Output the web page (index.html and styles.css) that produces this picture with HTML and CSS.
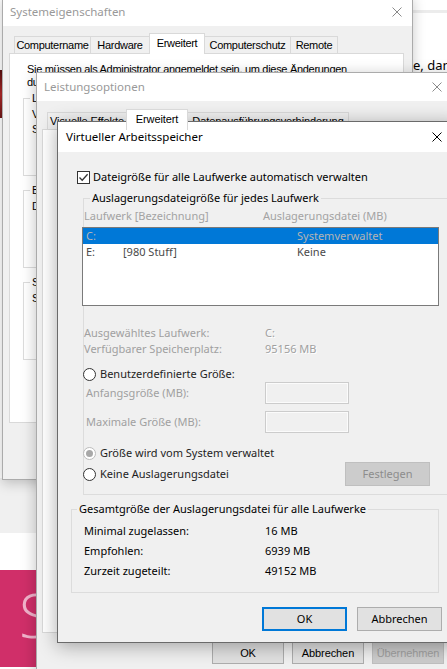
FILE: index.html
```html
<!DOCTYPE html>
<html lang="de">
<head>
<meta charset="utf-8">
<title>Virtueller Arbeitsspeicher</title>
<link rel="stylesheet" href="styles.css">
</head>
<body>
<div class="desktop">
  <div class="bg-band"></div>
  <div class="bg-red"></div>
  <div class="bg-text">e, dann</div>
  <div class="bg-grey"></div>
  <div class="bg-white"></div>
  <div class="bg-tile"><span class="tile-letter">S</span></div>

  <section class="win win-sys">
    <header class="titlebar tb-sys">
      <span class="title title-inactive">Systemeigenschaften</span>
      <svg class="close close-sys" viewBox="0 0 10 10" width="10" height="10"><path d="M0.5 0.5 L9.5 9.5 M9.5 0.5 L0.5 9.5" stroke="currentColor" stroke-width="1" fill="none"/></svg>
    </header>
    <div class="classic sys-body">
      <div class="tabs tabs-sys">
        <span class="tab w-cn">Computername</span>
        <span class="tab w-hw">Hardware</span>
        <span class="tab sel w-er">Erweitert</span>
        <span class="tab w-cs">Computerschutz</span>
        <span class="tab w-re">Remote</span>
      </div>
      <div class="sys-panel">
        <p class="sys-intro">Sie müssen als Administrator angemeldet sein, um diese Änderungen<br>durchführen zu können.</p>
        <div class="sgroup">
          <span class="slegend">Leistung</span>
          <p class="sgtext">Visuelle Effekte, Prozessorzeitplanung, Speichernutzung und<br>Speicherverwaltung</p>
        </div>
        <div class="sgroup">
          <span class="slegend">Benutzerprofile</span>
          <p class="sgtext">Desktopeinstellungen bezüglich der Anmeldung</p>
        </div>
        <div class="sgroup">
          <span class="slegend">Starten und Wiederherstellen</span>
          <p class="sgtext">Systemstart, Systemfehler und Debuginformationen</p>
        </div>
      </div>
    </div>
  </section>

  <section class="win win-perf">
    <header class="titlebar tb-perf">
      <span class="title title-inactive">Leistungsoptionen</span>
      <svg class="close close-perf" viewBox="0 0 10 10" width="10" height="10"><path d="M0.5 0.5 L9.5 9.5 M9.5 0.5 L0.5 9.5" stroke="currentColor" stroke-width="1" fill="none"/></svg>
    </header>
    <div class="classic perf-body">
      <div class="tabs tabs-perf">
        <span class="tab w-ve">Visuelle Effekte</span>
        <span class="tab sel w-pe">Erweitert</span>
        <span class="tab w-dv">Datenausführungsverhinderung</span>
      </div>
      <div class="perf-panel"></div>
      <div class="perf-buttons">
        <span class="cbtn">OK</span>
        <span class="cbtn">Abbrechen</span>
        <span class="cbtn cbtn-dis">Übernehmen</span>
      </div>
    </div>
  </section>

  <section class="win win-vm">
    <header class="titlebar tb-vm">
      <span class="title">Virtueller Arbeitsspeicher</span>
      <svg class="close close-vm" viewBox="0 0 10 10" width="10" height="10"><path d="M0.5 0.5 L9.5 9.5 M9.5 0.5 L0.5 9.5" stroke="currentColor" stroke-width="1" fill="none"/></svg>
    </header>
    <div class="vm-body">
      <div class="check-row">
        <span class="cb"><svg viewBox="0 0 11 11" width="11" height="11"><path d="M1.5 5.5 L4.2 8.3 L9.6 2.2" fill="none" stroke="#333" stroke-width="1.3"/></svg></span>
        <span class="lbl">Dateigröße für alle Laufwerke automatisch verwalten</span>
      </div>

      <div class="group group-drives">
        <span class="legend">Auslagerungsdateigröße für jedes Laufwerk</span>
        <div class="hdr-row">
          <span class="hdr-c1">Laufwerk [Bezeichnung]</span>
          <span>Auslagerungsdatei (MB)</span>
        </div>
        <div class="listbox">
          <div class="lrow sel"><span class="c1">C:</span><span class="c2"></span><span class="c3">Systemverwaltet</span></div>
          <div class="lrow"><span class="c1">E:</span><span class="c2">[980 Stuff]</span><span class="c3">Keine</span></div>
        </div>
        <div class="info">
          <div class="info-row"><span class="info-l">Ausgewähltes Laufwerk:</span><span class="info-v">C:</span></div>
          <div class="info-row"><span class="info-l">Verfügbarer Speicherplatz:</span><span class="info-v">95156 MB</span></div>
        </div>
        <div class="radio-row r-custom"><span class="rb"></span><span class="rlbl">Benutzerdefinierte Größe:</span></div>
        <div class="field-row f-first"><span class="field-l">Anfangsgröße (MB):</span><span class="input"></span></div>
        <div class="field-row f-second"><span class="field-l">Maximale Größe (MB):</span><span class="input"></span></div>
        <div class="radio-row r-system"><span class="rb rb-on"></span><span class="rlbl">Größe wird vom System verwaltet</span></div>
        <div class="radio-row r-none">
          <span class="rgroup"><span class="rb"></span><span class="rlbl">Keine Auslagerungsdatei</span></span>
          <span class="btn btn-dis">Festlegen</span>
        </div>
      </div>

      <div class="group group-total">
        <span class="legend legend-total">Gesamtgröße der Auslagerungsdatei für alle Laufwerke</span>
        <div class="tot-row"><span class="tot-l">Minimal zugelassen:</span><span>16 MB</span></div>
        <div class="tot-row"><span class="tot-l">Empfohlen:</span><span>6939 MB</span></div>
        <div class="tot-row"><span class="tot-l">Zurzeit zugeteilt:</span><span>49152 MB</span></div>
      </div>

      <div class="vm-buttons">
        <span class="btn btn-default">OK</span>
        <span class="btn">Abbrechen</span>
      </div>
    </div>
  </section>
</div>
</body>
</html>
```

FILE: styles.css
```css
* { box-sizing: border-box; }
html, body { margin: 0; padding: 0; }
body {
  width: 447px;
  height: 669px;
  overflow: hidden;
  background: #fff;
  font-family: "Noto Sans", "Open Sans", sans-serif;
  font-size: 11px;
  color: #000;
}
p { margin: 0; }

.desktop { position: relative; width: 447px; height: 669px; overflow: hidden; background: #fff; }

/* background desktop bits */
.bg-band { position: absolute; left: 412px; top: 10px; width: 40px; height: 3px; background: #ececec; }
.bg-red { position: absolute; left: 0; top: 70px; width: 3px; height: 48px; background: linear-gradient(#5a1010, #b02a2a 50%, #6e1616); }
.bg-text { position: absolute; left: 413px; top: 57px; font-size: 13px; line-height: 16px; white-space: nowrap; color: #000; }
.bg-grey { position: absolute; left: 0; top: 478px; width: 60px; height: 55px; background: #f0f0f0; }
.bg-white { position: absolute; left: 0; top: 533px; width: 60px; height: 37px; background: #fff; }
.bg-tile { position: absolute; left: 0; top: 570px; width: 60px; height: 97px; background: #d02f69; padding: 15px 0 0 19px; }
.tile-letter { display: block; font-family: "Open Sans", "Noto Sans", sans-serif; font-weight: 300; font-size: 60px; line-height: 60px; color: #f1b3cb; }

/* windows */
.win { position: absolute; background: #f0f0f0; display: flex; flex-direction: column; }
.win-sys { left: 2px; top: -4px; width: 411px; height: 484px; border: 1px solid #ababab; box-shadow: 0 3px 12px rgba(0,0,0,0.22); }
.win-perf { left: 36px; top: 72px; width: 422px; height: 620px; border: 1px solid #ababab; box-shadow: 0 3px 14px rgba(0,0,0,0.25); }
.win-vm { left: 57px; top: 121px; width: 403px; height: 522px; border: 1px solid #6a6a6a; box-shadow: 0 3px 18px rgba(0,0,0,0.33); }

.titlebar { flex: none; background: #fff; display: flex; align-items: center; justify-content: space-between; }
.tb-sys { height: 29px; padding-left: 7px; }
.tb-perf { height: 28px; padding-left: 7px; }
.tb-vm { height: 30px; padding-left: 8px; }
.title { font-family: "Noto Sans", "Open Sans", sans-serif; font-size: 11.5px; line-height: 16px; color: #000; white-space: nowrap; }
.title-inactive { color: #999; }
.close { flex: none; display: block; color: #000; }
.close-sys { margin-right: 10px; color: #8a8a8a; }
.close-perf { margin-right: 15px; color: #8a8a8a; }
.close-vm { margin-right: 17px; }

/* classic (MS Sans Serif) dialogs */
.classic { font-family: "Liberation Sans", Arial, sans-serif; font-size: 11px; letter-spacing: -0.3px; color: #000; display: flex; flex-direction: column; align-items: flex-start; }
.perf-body { letter-spacing: -0.1px; }

.tabs { display: flex; align-items: flex-end; height: 20px; flex: none; }
.tabs-sys { margin: 7px 0 0 11px; }
.tabs-perf { margin: 8px 0 0 10px; }
.tab { height: 17px; border: 1px solid #d9d9d9; border-bottom: none; background: #f0f0f0; margin-left: -1px; display: flex; align-items: center; justify-content: center; white-space: nowrap; line-height: 13px; }
.tab:first-child { margin-left: 0; }
.tab.sel { height: 21px; margin-bottom: -1px; background: #fff; position: relative; z-index: 1; padding-bottom: 2px; }
.w-cn { width: 77px; }
.w-hw { width: 60px; }
.w-er { width: 56px; }
.w-cs { width: 87px; }
.w-re { width: 48px; }
.w-ve { width: 80px; }
.w-pe { width: 62px; }
.w-dv { width: 162px; }

.sys-panel { margin-left: 6px; width: 395px; height: 370px; background: #fff; border: 1px solid #d9d9d9; padding: 9px 0 0 13px; }
.sys-intro { margin-left: 4px; line-height: 13px; white-space: nowrap; }
.sgroup { position: relative; width: 366px; height: 78px; border: 1px solid #dcdcdc; margin-top: 14px; padding: 8px 0 0 8px; }
.sys-intro + .sgroup { margin-top: 9px; }
.slegend { position: absolute; left: 6px; top: -8px; line-height: 15px; padding: 0 2px; background: #fff; white-space: nowrap; }
.sgtext { line-height: 15px; white-space: nowrap; }

.perf-panel { flex: none; margin-left: 5px; width: 412px; height: 504px; background: #fff; border: 1px solid #d9d9d9; }
.perf-buttons { display: flex; gap: 8px; margin: 9px 0 0 175px; }
.cbtn { width: 72px; height: 22px; border: 1px solid #adadad; background: #e1e1e1; display: flex; align-items: center; justify-content: center; white-space: nowrap; }
.cbtn-dis { background: #cccccc; border-color: #bfbfbf; color: #a0a0a0; }

/* virtual memory dialog */
.vm-body { flex: 1; display: flex; flex-direction: column; align-items: flex-start; padding: 17px 0 11px 0; line-height: 16px; }
.check-row { display: flex; align-items: center; height: 16px; margin-left: 19px; white-space: nowrap; }
.cb { width: 13px; height: 13px; border: 1px solid #333; background: #fff; display: flex; align-items: center; justify-content: center; margin-right: 3px; }
.cb svg { display: block; }

.group { position: relative; border: 1px solid #dcdcdc; display: flex; flex-direction: column; align-items: flex-start; }
.legend { position: absolute; left: 6px; top: -9px; line-height: 16px; padding: 0 2px; background: #f0f0f0; white-space: nowrap; }
.legend-total { left: 5px; }

.group-drives { margin: 13px 0 0 25px; width: 369px; padding-bottom: 8px; }
.hdr-row { display: flex; height: 14px; line-height: 14px; margin-top: 10px; color: #a3a3a3; white-space: nowrap; }
.hdr-c1 { width: 179px; }
.listbox { margin: 4px 0 0 -2px; width: 357px; height: 79px; border: 1px solid #7a7a7a; background: #fff; }
.lrow { display: flex; align-items: center; height: 16px; padding-left: 3px; color: #4a4a4a; white-space: nowrap; }
.lrow.sel { background: #0078d7; color: #b4b4b4; }
.c1 { width: 37px; }
.c2 { width: 174px; }

.info { margin-top: 19px; color: #a0a0a0; }
.info-row { display: flex; height: 16px; white-space: nowrap; }
.info-l { width: 181px; }
.info-v { text-shadow: 1px 1px 0 #fff; }

.radio-row { display: flex; align-items: center; height: 16px; margin-left: -1px; white-space: nowrap; color: #1e1e1e; }
.rgroup { display: flex; align-items: center; }
.rb { width: 13px; height: 13px; border-radius: 50%; border: 1px solid #333; background: #fff; margin-right: 4px; display: flex; align-items: center; justify-content: center; flex: none; }
.rb-on { border-color: #bcbcbc; }
.rb-on::after { content: ""; width: 7px; height: 7px; border-radius: 50%; background: #a8a8a8; }
.r-custom { margin-top: 9px; }
.r-system { margin-top: 12px; }
.r-none { margin-top: 1px; height: 24px; width: 347px; justify-content: space-between; }

.field-row { display: flex; align-items: center; height: 22px; white-space: nowrap; color: #a0a0a0; }
.f-second { margin-top: 7px; }
.field-l { width: 179px; margin-left: 2px; }
.input { width: 84px; height: 22px; border: 1px solid #cccccc; background: #f0f0f0; box-shadow: inset 0 0 0 1px #fbfbfb; }

.btn { width: 85px; height: 24px; border: 1px solid #adadad; background: #e1e1e1; display: flex; align-items: center; justify-content: center; color: #000; white-space: nowrap; }
.btn-dis { background: #cccccc; border-color: #bfbfbf; color: #8d8d8d; }
.btn-default { border: 2px solid #0078d7; }

.group-total { margin: 14px 0 0 13px; width: 368px; padding: 11px 0 11px 0; }
.tot-row { display: flex; align-items: center; height: 20px; padding-left: 12px; white-space: nowrap; color: #000; }
.tot-l { width: 181px; }

.vm-buttons { display: flex; gap: 10px; margin: 14px 0 0 204px; }
```
